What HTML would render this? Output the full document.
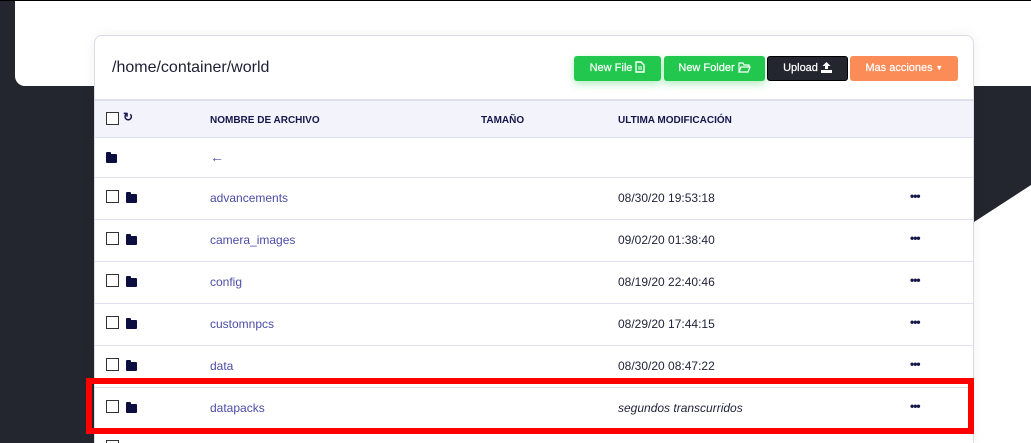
<!DOCTYPE html>
<html><head><meta charset="utf-8"><style>
*{box-sizing:border-box;margin:0;padding:0}
html,body{width:1031px;height:443px;overflow:hidden}
body{background:#fff;font-family:"Liberation Sans",sans-serif;position:relative}
.dl{position:absolute;left:0;top:0;width:94px;height:443px;background:#23262f}
.top{position:absolute;left:15px;top:1px;width:1016px;height:85px;background:#fff;border-bottom-left-radius:10px}
.line{position:absolute;left:0;top:0;width:1031px;height:1px;background:#000}
.card{position:absolute;left:94px;top:35px;width:880px;height:408px;background:#fff;border:1px solid #dcdce6;border-bottom:none;border-radius:8px 8px 0 0;overflow:hidden;box-shadow:0 0 12px rgba(0,0,0,.06)}
.path{position:absolute;left:17px;top:23px;font-size:16px;color:#1d1f33}
.btn{position:absolute;top:20px;height:25px;border-radius:3px;color:#fff;font-size:11px;line-height:25px;text-align:center;-webkit-text-stroke:.2px #fff}
.btn svg{vertical-align:-2px;margin-left:3px}
.g{background:#21c84d;box-shadow:0 3px 8px rgba(33,200,77,.35)}
.row{position:absolute;left:0;width:880px;border-top:1px solid #dfe0f0}
.hd{background:#f3f3fc;border-top:2px solid #dfe0ee;font-weight:bold;font-size:10px;color:#15174a}
.t{position:absolute;font-size:12px}
.lk{color:#4b4ca6}
.dt{color:#1f2138}
.cb{position:absolute;left:11px;width:13px;height:13px;border:1.5px solid #333;background:#fff}
.fd{position:absolute;width:11px;height:9px;background:#0d0e40;border-radius:1px}
.fd:before{content:"";position:absolute;left:0;top:-2px;width:5px;height:3px;background:#0d0e40;border-radius:1px 1px 0 0}
.dots{position:absolute;left:815px;font-size:12px;font-weight:bold;color:#15174a;letter-spacing:-1px}
.red{position:absolute;left:86px;top:378px;width:888px;height:56px;border:6px solid #f00}
</style></head><body>
<div class="dl"></div>
<div class="top"></div>
<div class="line"></div>
<svg style="position:absolute;left:960px;top:86px" width="71" height="140"><polygon points="0,0 71,0 71,99 14,136 0,136" fill="#23262f"/></svg>
<div class="card">
<div class="path">/home/container/world</div>
<div class="btn g" style="left:479px;width:87px">New File<svg width="10" height="12" viewBox="0 0 10 12"><path d="M1 1h5l3 3v7H1z" fill="none" stroke="#fff" stroke-width="1.4"/><path d="M3 6h4M3 8h4" stroke="#fff"/></svg></div>
<div class="btn g" style="left:569px;width:101px">New Folder<svg width="13" height="11" viewBox="0 0 13 11"><path d="M1 10V1h4l1 2h5v2M1 10l2-5h9l-2 5z" fill="none" stroke="#fff" stroke-width="1.2"/></svg></div>
<div class="btn" style="left:672px;width:81px;background:#23262f;border:1px solid #000;line-height:23px">Upload<svg width="11" height="11" viewBox="0 0 11 11"><path d="M5.5 0L1.5 4h2.5v3h3V4h2.5z" fill="#fff"/><rect x="0" y="8" width="11" height="3" fill="#fff"/></svg></div>
<div class="btn" style="left:755px;width:108px;background:#fb8c58">Mas acciones <span style="font-size:7px;vertical-align:1px">&#9660;</span></div>

<div class="row hd" style="top:63px;height:38px">
<div class="cb" style="top:11px"></div><div class="t" style="left:28px;top:9px;font-size:12px;font-weight:bold">&#8635;</div>
<div class="t" style="left:115px;top:14px;font-size:10px">NOMBRE DE ARCHIVO</div>
<div class="t" style="left:386px;top:14px;font-size:10px">TAMAÑO</div>
<div class="t" style="left:523px;top:14px;font-size:10px">ULTIMA MODIFICACIÓN</div>
</div>
<div class="row" style="top:101px;height:40px">
<div class="fd" style="left:11px;top:16px"></div><div class="t lk" style="left:115px;top:11px;font-size:14px">&#8592;</div>
</div>
<div class="row" style="top:141px;height:42px"><div class="cb" style="top:12px"></div><div class="fd" style="left:31px;top:16px"></div><div class="t lk" style="left:115px;top:13px">advancements</div><div class="t dt" style="left:523px;top:13px">08/30/20 19:53:18</div><div class="dots" style="top:11px">•••</div></div>
<div class="row" style="top:183px;height:42px"><div class="cb" style="top:12px"></div><div class="fd" style="left:31px;top:16px"></div><div class="t lk" style="left:115px;top:13px">camera_images</div><div class="t dt" style="left:523px;top:13px">09/02/20 01:38:40</div><div class="dots" style="top:11px">•••</div></div>
<div class="row" style="top:225px;height:42px"><div class="cb" style="top:12px"></div><div class="fd" style="left:31px;top:16px"></div><div class="t lk" style="left:115px;top:13px">config</div><div class="t dt" style="left:523px;top:13px">08/19/20 22:40:46</div><div class="dots" style="top:11px">•••</div></div>
<div class="row" style="top:267px;height:42px"><div class="cb" style="top:12px"></div><div class="fd" style="left:31px;top:16px"></div><div class="t lk" style="left:115px;top:13px">customnpcs</div><div class="t dt" style="left:523px;top:13px">08/29/20 17:44:15</div><div class="dots" style="top:11px">•••</div></div>
<div class="row" style="top:309px;height:42px"><div class="cb" style="top:12px"></div><div class="fd" style="left:31px;top:16px"></div><div class="t lk" style="left:115px;top:13px">data</div><div class="t dt" style="left:523px;top:13px">08/30/20 08:47:22</div><div class="dots" style="top:11px">•••</div></div>
<div class="row" style="top:351px;height:42px"><div class="cb" style="top:12px"></div><div class="fd" style="left:31px;top:16px"></div><div class="t lk" style="left:115px;top:13px">datapacks</div><div class="t dt" style="left:523px;top:13px;font-style:italic">segundos transcurridos</div><div class="dots" style="top:11px">•••</div></div>
<div class="row" style="top:393px;height:42px"><div class="cb" style="top:10px"></div></div>
</div>
<div class="red"></div>
</body></html>
